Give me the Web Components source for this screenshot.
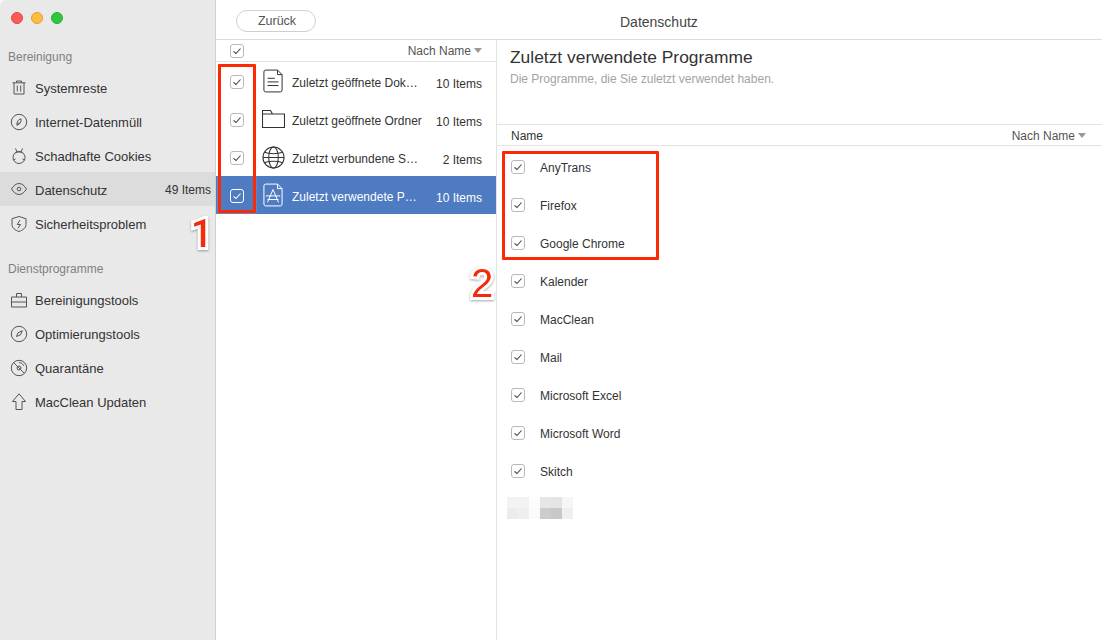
<!DOCTYPE html>
<html lang="de">
<head>
<meta charset="utf-8">
<title>Datenschutz</title>
<style>
  html, body { margin: 0; padding: 0; background: #fff; }
  body { font-family: "Liberation Sans", Arial, sans-serif; font-size: 13px; color: #333; }
</style>
</head>
<body>
<mac-window>
  <side-bar slot="side">
    <side-label style="margin-top:12px">Bereinigung</side-label>
    <side-item icon="trash" style="margin-top:3px">Systemreste</side-item>
    <side-item icon="leaf">Internet-Datenmüll</side-item>
    <side-item icon="bug">Schadhafte Cookies</side-item>
    <side-item icon="eye" count="49 Items" selected>Datenschutz</side-item>
    <side-item icon="shield">Sicherheitsproblem</side-item>
    <side-label style="margin-top:19px">Dienstprogramme</side-label>
    <side-item icon="case" style="margin-top:3px">Bereinigungstools</side-item>
    <side-item icon="compass">Optimierungstools</side-item>
    <side-item icon="disc">Quarantäne</side-item>
    <side-item icon="up">MacClean Updaten</side-item>
  </side-bar>
  <div slot="list">
    <list-head></list-head>
    <category-row icon="doc" count="10 Items">Zuletzt geöffnete Dok…</category-row>
    <category-row icon="folder" count="10 Items">Zuletzt geöffnete Ordner</category-row>
    <category-row icon="globe" count="2 Items">Zuletzt verbundene S…</category-row>
    <category-row icon="app" count="10 Items" selected>Zuletzt verwendete P…</category-row>
  </div>
  <detail-pane slot="detail">
    <program-row>AnyTrans</program-row>
    <program-row>Firefox</program-row>
    <program-row>Google Chrome</program-row>
    <program-row>Kalender</program-row>
    <program-row>MacClean</program-row>
    <program-row>Mail</program-row>
    <program-row>Microsoft Excel</program-row>
    <program-row>Microsoft Word</program-row>
    <program-row>Skitch</program-row>
    <blurred-name></blurred-name>
  </detail-pane>
  <mark-box slot="marks" style="left:218px;top:64px;width:38px;height:149px"></mark-box>
  <mark-box slot="marks" style="left:502px;top:151px;width:157px;height:109px"></mark-box>
  <mark-number slot="marks" style="left:191px;top:214px;font-family:Roboto,sans-serif;font-weight:500;font-size:38px">1</mark-number>
  <mark-number slot="marks" style="left:471px;top:263px">2</mark-number>
</mac-window>

<script>
const ICONS = {
  trash: '<path d="M2.500 3.800h13M6.500 3.800V2h5v1.800M4 3.800v11.200h10V3.800M7.300 6.500v6M10.700 6.500v6"/>',
  leaf: '<circle cx="9" cy="9" r="7.700"/><path d="M7 12.200c-.6-3 1-5.600 4-6.400.5 3-1 5.600-4 6.400zM7 12.200l2.200-3"/>',
  bug: '<ellipse cx="9" cy="10.500" rx="6" ry="6"/><path d="M5.500 1.500 7 5M12.500 1.500 11 5M5.500 5.800c2-1.200 5-1.200 7 0M3 13l2.500-1M15 13l-2.500-1"/>',
  eye: '<path d="M1.500 8C3.500 4.800 6 2.500 9 2.500S14.500 4.800 16.500 8C14.500 11.200 12 13.500 9 13.500S3.500 11.200 1.500 8z"/><circle cx="9" cy="8" r="1.800"/>',
  shield: '<path d="M9 1.500 16 3.700v5.800c0 3.500-3.300 5.800-7 7-3.700-1.200-7-3.500-7-7V3.700z"/><path d="M10 5 7.300 9.500h3.300L8 13.300"/>',
  case: '<path d="M1.500 6h15v10h-15zM1.500 11h15M6.500 6V2.500h5V6"/>',
  compass: '<circle cx="9" cy="9" r="7.700"/><path d="M6.500 11.500 8 7.800 12.300 5.700 10.500 9.800z"/>',
  disc: '<circle cx="9" cy="9" r="7.700"/><circle cx="9" cy="9" r="2"/><path d="M3.500 3.500 14.500 14.500M9 3.500c2 0 4 1.500 4.800 3.300"/>',
  up: '<path d="M9 .8 15.500 8.500H12v8H6v-8H2.500z"/>'
};

const FILE_ICONS = {
  doc: '<svg width="20" height="24" viewBox="0 0 22 26"><path d="M3 1h13l5 5v17a2 2 0 0 1-2 2H3a2 2 0 0 1-2-2V3a2 2 0 0 1 2-2zM16 1v5h5M5 10h8M5 14h12M5 18h12"/></svg>',
  folder: '<svg width="23" height="18" viewBox="0 0 23 18"><path d="M.5 17.500V.5h8l2 3.500h12v13.500zM.5 4h10"/></svg>',
  globe: '<svg width="23" height="23" viewBox="0 0 24 24"><circle cx="12" cy="12" r="11"/><ellipse cx="12" cy="12" rx="5" ry="11"/><path d="M1 12h22M2.500 6.500c5 2 14 2 19 0M2.500 17.500c5-2 14-2 19 0"/></svg>',
  app: '<svg width="20" height="24" viewBox="0 0 22 26"><path d="M3 1h13l5 5v17a2 2 0 0 1-2 2H3a2 2 0 0 1-2-2V3a2 2 0 0 1 2-2zM16 1v5h5M3 14h16M11 7 5 21M11 7l6 14M5 18h12"/></svg>'
};

class CheckBox extends HTMLElement {
  constructor() {
    super();
    this.attachShadow({ mode: "open" }).innerHTML = `
      <style>
        :host { display: block; flex: none; width: 14px; height: 14px; box-sizing: border-box; border: 1px solid var(--check-border, #b9b9b9); border-radius: 3px; background: var(--check-bg, #fff); }
        svg { display: block; fill: none; stroke: var(--check-color, #444); stroke-width: 1.100; }
      </style>
      <svg width="12" height="12" viewBox="0 0 12 12"><path d="M2.500 6.300 5 8.500 9.500 3.500"/></svg>`;
  }
}

class SideLabel extends HTMLElement {
  constructor() {
    super();
    this.attachShadow({ mode: "open" }).innerHTML = `
      <style>
        :host { display: block; height: 20px; line-height: 20px; padding-left: 8px; font-size: 12px; color: #808080; }
      </style>
      <slot></slot>`;
  }
}

class SideItem extends HTMLElement {
  constructor() {
    super();
    const icon = ICONS[this.getAttribute("icon")] || "";
    const count = this.getAttribute("count") || "";
    this.attachShadow({ mode: "open" }).innerHTML = `
      <style>
        :host { display: flex; align-items: center; height: 34px; box-sizing: border-box; padding: 2px 4px 0 10px; color: #333; }
        :host([selected]) { background: #dcdcdc; }
        svg { flex: none; fill: none; stroke: #555; stroke-width: 1; }
        .name { margin-left: 7px; flex: 1; white-space: nowrap; }
        .count { font-size: 12px; }
      </style>
      <svg width="18" height="18" viewBox="0 0 18 18">${icon}</svg>
      <span class="name"><slot></slot></span>
      <span class="count">${count}</span>`;
  }
}

class CategoryRow extends HTMLElement {
  constructor() {
    super();
    const icon = FILE_ICONS[this.getAttribute("icon")] || "";
    const count = this.getAttribute("count") || "";
    this.attachShadow({ mode: "open" }).innerHTML = `
      <style>
        :host { display: flex; align-items: center; height: 38px; box-sizing: border-box; padding: 2px 14px 0 14px; color: #333; --stroke: #333; }
        :host([selected]) { background: #4e7bc1; color: #fff; --stroke: #fff; --check-border: #fff; --check-bg: transparent; --check-color: #fff; }
        .icon { flex: none; width: 24px; margin: -2px 0 0 17px; display: flex; justify-content: center; }
        svg { display: block; fill: none; stroke: var(--stroke); stroke-width: 1.100; }
        .name { margin: 2px 0 0 7px; flex: 1; white-space: nowrap; font-size: 12px; }
        .count { margin-top: 4px; font-size: 12px; }
      </style>
      <check-box></check-box>
      <span class="icon">${icon}</span>
      <span class="name"><slot></slot></span>
      <span class="count">${count}</span>`;
  }
}

class ProgramRow extends HTMLElement {
  constructor() {
    super();
    this.attachShadow({ mode: "open" }).innerHTML = `
      <style>
        :host { display: flex; align-items: center; gap: 15px; height: 38px; padding-left: 14px; font-size: 12px; color: #333; }
        check-box { margin-top: -2px; }
      </style>
      <check-box></check-box>
      <span><slot></slot></span>`;
  }
}

class SortLabel extends HTMLElement {
  constructor() {
    super();
    this.attachShadow({ mode: "open" }).innerHTML = `
      <style>
        :host { display: inline-flex; align-items: center; gap: 4px; font-size: 12px; color: #555; }
        i { width: 0; height: 0; border: 4px solid transparent; border-top: 5px solid #999; border-bottom: 0; margin-left: -1px; }
      </style>
      <span><slot></slot></span><i></i>`;
  }
}

class BlurredName extends HTMLElement {
  constructor() {
    super();
    const cells = ["#f3f3f3","#f3f3f3","#fdfdfd","#e6e6e6","#e4e4e4","#f6f6f6","#ececec","#efefef","#fbfbfb","#cdcbcb","#c8c8c8","#efeff1"];
    this.attachShadow({ mode: "open" }).innerHTML = `
      <style>
        :host { display: grid; grid-template-columns: repeat(6, 11px); grid-auto-rows: 11px; margin: 6px 0 0 10px; }
      </style>
      ${cells.map(c => `<div style="background:${c}"></div>`).join("")}`;
  }
}

class MarkBox extends HTMLElement {
  constructor() {
    super();
    this.attachShadow({ mode: "open" }).innerHTML = `
      <style>
        :host { position: absolute; box-sizing: border-box; border: 3px solid #fb2a05; border-radius: 1px; box-shadow: 0 0 1px #fff; pointer-events: none; }
      </style>`;
  }
}

class MarkNumber extends HTMLElement {
  constructor() {
    super();
    this.attachShadow({ mode: "open" }).innerHTML = `
      <style>
        :host { position: absolute; font: 40px/40px "Liberation Sans", Arial, sans-serif; color: #f52a0a; -webkit-text-stroke: 6px #fff; paint-order: stroke fill; filter: drop-shadow(0 1px 1px rgba(0,0,0,.35)); pointer-events: none; }
      </style>
      <slot></slot>`;
  }
}

class SideBar extends HTMLElement {
  constructor() {
    super();
    this.attachShadow({ mode: "open" }).innerHTML = `
      <style>
        :host { display: block; flex: none; width: 216px; box-sizing: border-box; height: 100%; background: #e9e9e9; border-right: 1px solid #d0d0d0; }
        .lights { display: flex; gap: 8px; padding: 12px 0 0 11px; height: 35px; box-sizing: border-box; }
        .lights i { width: 12px; height: 12px; border-radius: 50%; box-sizing: border-box; }
        .red { background: #fc5b57; border: 1px solid #e3473f; }
        .yellow { background: #fdbc40; border: 1px solid #dea032; }
        .green { background: #2ec840; border: 1px solid #2aac38; }
      </style>
      <div class="lights"><i class="red"></i><i class="yellow"></i><i class="green"></i></div>
      <slot></slot>`;
  }
}

class MacWindow extends HTMLElement {
  constructor() {
    super();
    this.attachShadow({ mode: "open" }).innerHTML = `
      <style>
        :host { display: flex; position: relative; width: 1102px; height: 640px; overflow: hidden; background: #fff; border-radius: 5px 5px 0 0; }
        .main { flex: 1; display: flex; flex-direction: column; min-width: 0; }
        .top { flex: none; height: 40px; box-sizing: border-box; border-bottom: 1px solid #dcdcdc; display: flex; align-items: center; position: relative; padding: 3px 0 0 20px; }
        .title { position: absolute; left: 404px; top: 14px; font-size: 14px; color: #444; }
        button { font: 12.500px "Liberation Sans", Arial, sans-serif; color: #555; width: 80px; height: 22px; border: 1px solid #cfcfcf; border-radius: 11px; background: #fff; padding: 0 0 0 2px; }
        .panes { flex: 1; display: flex; min-height: 0; }
        .list { flex: none; width: 280px; border-right: 1px solid #e3e3e3; }
        .detail { flex: 1; min-width: 0; }
      </style>
      <slot name="side"></slot>
      <div class="main">
        <div class="top"><button>Zurück</button><span class="title">Datenschutz</span></div>
        <div class="panes">
          <div class="list"><slot name="list"></slot></div>
          <div class="detail"><slot name="detail"></slot></div>
        </div>
      </div>
      <slot name="marks"></slot>`;
  }
}

class ListHead extends HTMLElement {
  constructor() {
    super();
    this.attachShadow({ mode: "open" }).innerHTML = `
      <style>
        :host { display: flex; align-items: center; justify-content: space-between; height: 22px; box-sizing: border-box; border-bottom: 1px solid #e3e3e3; padding: 0 14px; }
      </style>
      <check-box></check-box>
      <sort-label>Nach Name</sort-label>`;
  }
}

class DetailPane extends HTMLElement {
  constructor() {
    super();
    this.attachShadow({ mode: "open" }).innerHTML = `
      <style>
        :host { display: block; }
        .intro { height: 84px; box-sizing: border-box; padding: 6px 0 0 13px; }
        h1 { margin: 0; font-size: 17.400px; line-height: 22px; font-weight: 400; color: #333; }
        p { margin: 3px 0 0; font-size: 12px; line-height: 16px; color: #a3a3a3; }
        .head { display: flex; align-items: center; justify-content: space-between; height: 22px; box-sizing: border-box; border-top: 1px solid #e3e3e3; border-bottom: 1px solid #e3e3e3; padding: 1px 16px 0 14px; font-size: 12px; color: #333; }
        .rows { padding-top: 3px; }
      </style>
      <div class="intro">
        <h1>Zuletzt verwendete Programme</h1>
        <p>Die Programme, die Sie zuletzt verwendet haben.</p>
      </div>
      <div class="head"><span>Name</span><sort-label>Nach Name</sort-label></div>
      <div class="rows"><slot></slot></div>`;
  }
}

customElements.define("check-box", CheckBox);
customElements.define("side-label", SideLabel);
customElements.define("side-item", SideItem);
customElements.define("category-row", CategoryRow);
customElements.define("program-row", ProgramRow);
customElements.define("sort-label", SortLabel);
customElements.define("blurred-name", BlurredName);
customElements.define("mark-box", MarkBox);
customElements.define("mark-number", MarkNumber);
customElements.define("side-bar", SideBar);
customElements.define("mac-window", MacWindow);
customElements.define("list-head", ListHead);
customElements.define("detail-pane", DetailPane);
</script>
</body>
</html>
